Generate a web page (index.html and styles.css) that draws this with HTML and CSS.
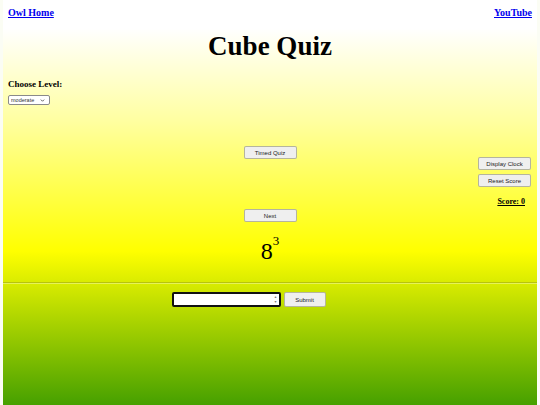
FILE: index.html
```html
<!DOCTYPE html>
<html lang="en">

<head>
  <meta charset="UTF-8">
  <meta name="viewport" content="width=device-width, initial-scale=1.0">
  <title>Cube Quiz</title>
  <link rel="stylesheet" href="styles.css">
</head>

<body>

  <div class="page">

    <nav class="topbar">
      <a href="#">Owl Home</a>
      <a href="#">YouTube</a>
    </nav>

    <h1 class="title">Cube Quiz</h1>

    <div class="level">
      <h3>Choose Level:</h3>
      <select id="level">
        <option>easy</option>
        <option selected>moderate</option>
        <option>hard</option>
      </select>
    </div>

    <div class="board">
      <div></div>
      <div class="center">
        <button class="btn" id="timed-btn">Timed Quiz</button>
        <button class="btn next-btn" id="next-btn">Next</button>
        <p class="question" id="question">8<sup>3</sup></p>
      </div>
      <div class="side">
        <button class="btn" id="clock-btn">Display Clock</button>
        <button class="btn" id="reset-btn">Reset Score</button>
        <p class="score" id="score">Score: 0</p>
      </div>
    </div>

    <hr class="divider">

    <!-- answer box -->
    <form class="answer" onsubmit="return false">
      <span class="answer-box">
        <input type="number" class="answer-input" id="answer">
        <span class="spin">&#9652;<br>&#9662;</span>
      </span>
      <button class="btn submit-btn" type="submit">Submit</button>
    </form>

  </div>

</body>

</html>
```

FILE: styles.css
```css
* {
  margin: 0;
  padding: 0;
  box-sizing: border-box;
}

body {
  background: #fbfdf4;
  font-family: "Liberation Serif", "Times New Roman", serif;
  color: #000;
  overflow: hidden;
}

.page {
  margin: 0 3px;
  height: 405px;
  background: linear-gradient(to bottom,
      #ffffff 0%,
      #ffffff 7%,
      #ffffa0 30%,
      #ffff00 62%,
      #46a000 100%);
}

.topbar {
  display: flex;
  justify-content: space-between;
  padding: 7px 5px 0;
}

.topbar a {
  font-size: 10px;
  line-height: 12px;
  font-weight: bold;
  color: #0000ee;
}

.title {
  margin-top: 12px;
  font-size: 27px;
  line-height: 30px;
  text-align: center;
}

.level {
  padding-left: 5px;
}

.level h3 {
  margin-top: 18px;
  font-size: 9px;
  line-height: 11px;
}

/* select with a small chevron */
.level select {
  margin-top: 5px;
  width: 42px;
  height: 10px;
  padding: 0 0 0 2px;
  font-size: 5.5px;
  font-family: "Liberation Sans", Arial, sans-serif;
  color: #333;
  border: 1px solid #8a8a8a;
  border-radius: 2px;
  appearance: none;
  -webkit-appearance: none;
  background: #fff url("data:image/svg+xml;utf8,<svg xmlns='http://www.w3.org/2000/svg' width='6' height='4' viewBox='0 0 6 4'><path d='M0.8 0.8 L3 3 L5.2 0.8' fill='none' stroke='%23333' stroke-width='1'/></svg>") no-repeat right 4px center;
  background-size: 5px 3px;
  display: block;
}

.board {
  display: grid;
  grid-template-columns: 1fr auto 1fr;
  margin-top: 41px;
}

.center {
  display: flex;
  flex-direction: column;
  align-items: center;
}

.side {
  justify-self: end;
  display: flex;
  flex-direction: column;
  align-items: flex-end;
  padding-top: 11px;
  padding-right: 6px;
}

.btn {
  width: 53px;
  height: 13px;
  font-size: 6px;
  font-family: "Liberation Sans", Arial, sans-serif;
  color: #1a1a1a;
  background: #efefef;
  border: 1px solid rgba(110, 110, 60, 0.45);
  border-radius: 2px;
  cursor: pointer;
}

.side .btn + .btn {
  margin-top: 4px;
}

.next-btn {
  margin-top: 50px;
}

.question {
  margin-top: 16px;
  font-size: 24px;
  line-height: 26px;
}

.question sup {
  font-size: 13px;
  line-height: 0;
  vertical-align: 14px;
}

.score {
  margin-top: 10px;
  margin-right: 6px;
  font-size: 8px;
  line-height: 10px;
  font-weight: bold;
  text-decoration: underline;
}

.divider {
  margin-top: 18px;
  border: none;
  border-top: 1px solid rgba(120, 120, 40, 0.35);
  border-bottom: 1px solid rgba(255, 255, 255, 0.35);
}

.answer {
  display: flex;
  justify-content: center;
  gap: 3px;
  margin-top: 8px;
  padding-right: 43px;
}

.answer-box {
  position: relative;
  display: block;
}

.answer-input {
  display: block;
  width: 109px;
  height: 15px;
  font-size: 8px;
  border: 2px solid #111;
  border-radius: 2px;
  background: #fff;
  -moz-appearance: textfield;
}

.answer-input::-webkit-inner-spin-button,
.answer-input::-webkit-outer-spin-button {
  -webkit-appearance: none;
  margin: 0;
}

.spin {
  position: absolute;
  right: 4px;
  top: 2px;
  font-family: "DejaVu Sans", sans-serif;
  font-size: 4px;
  line-height: 5px;
  color: #777;
  text-align: center;
}

.submit-btn {
  width: 42px;
  height: 15px;
}
```
